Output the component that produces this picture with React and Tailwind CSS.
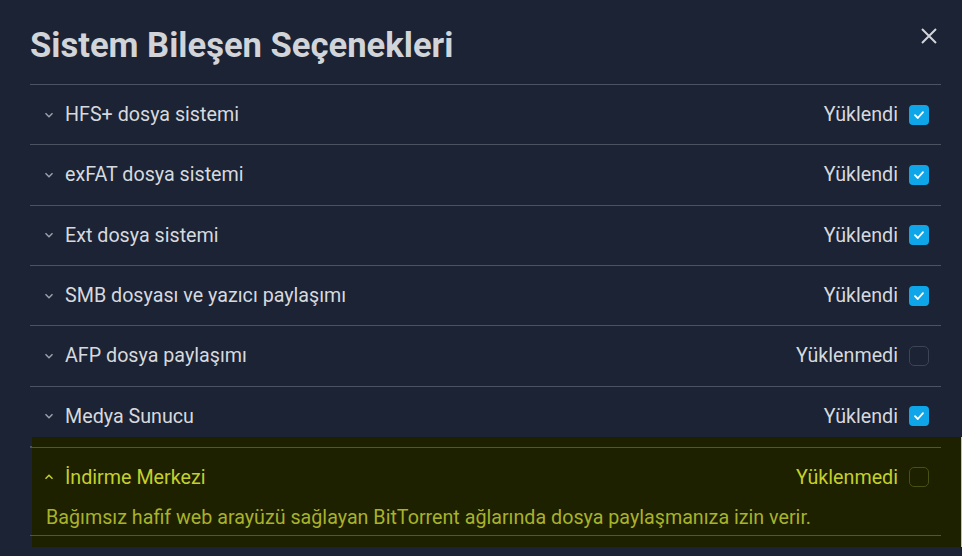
import React from 'react';

const items = [
  { name: 'HFS+ dosya sistemi', loaded: true },
  { name: 'exFAT dosya sistemi', loaded: true },
  { name: 'Ext dosya sistemi', loaded: true },
  { name: 'SMB dosyası ve yazıcı paylaşımı', loaded: true },
  { name: 'AFP dosya paylaşımı', loaded: false },
  { name: 'Medya Sunucu', loaded: true },
];

function Chevron({ up, className }) {
  return (
    <svg width="10" height="10" viewBox="0 0 10 10" className={className}>
      <path d={up ? 'M1.5 6.8 L5 3.3 L8.5 6.8' : 'M1.5 3.3 L5 6.8 L8.5 3.3'} fill="none" stroke="currentColor" strokeWidth="1.5" />
    </svg>
  );
}

function Checkbox({ checked, dim }) {
  if (checked) {
    return (
      <div className="w-5 h-5 rounded-[4px] bg-[#0ea5e9] flex items-center justify-center">
        <svg width="14" height="14" viewBox="0 0 14 14">
          <path d="M3 7.2 L5.8 10 L11 4.2" fill="none" stroke="white" strokeWidth="1.8" strokeLinecap="round" strokeLinejoin="round" />
        </svg>
      </div>
    );
  }
  return <div className={`w-5 h-5 rounded-[5px] border ${dim ? 'border-[#4a4f12]' : 'border-[#3b4556]'}`} />;
}

function Row({ name, loaded }) {
  return (
    <div className="h-[60.33px] border-b border-[#4b5261] flex items-center pl-[14px] pr-[12px]">
      <Chevron className="text-[#9aa0aa] mr-[11px]" />
      <span className="flex-1 text-[19.7px] text-[#d6d9de]">{name}</span>
      <span className="text-[19.7px] text-[#d6d9de] mr-[11px]">{loaded ? 'Yüklendi' : 'Yüklenmedi'}</span>
      <Checkbox checked={loaded} />
    </div>
  );
}

export default function App() {
  return (
    <div className="w-[962px] h-[556px] overflow-hidden bg-[#1c2334] font-['Roboto',sans-serif] pl-[30px] pr-[21px]">
      <div className="h-[85px] flex items-start justify-between border-b border-[#4b5261]">
        <h1 className="text-[34.6px] font-bold text-[#d1d4d9] leading-none mt-[28px]">Sistem Bileşen Seçenekleri</h1>
        <svg width="18" height="18" viewBox="0 0 18 18" className="mt-[27px] mr-[3px] text-[#d1d4d9]">
          <path d="M2 2 L16 16 M16 2 L2 16" stroke="currentColor" strokeWidth="2" />
        </svg>
      </div>
      <div className="w-[911px]">
        {items.map((it) => (
          <Row key={it.name} {...it} />
        ))}
      </div>
      <div className="ml-[2px] mr-[-21px] w-[930px] bg-[#1d2100] border-r border-[#c9d62a] pt-[10px] pb-[11px] -mt-[10px]">
        <div className="w-[911px] ml-[-2px] border-t border-b border-[#555a1c]">
          <div className="h-[59px] flex items-center pl-[14px] pr-[12px]">
            <Chevron up className="text-[#c6d02b] mr-[11px]" />
            <span className="flex-1 text-[19.7px] text-[#c6d02b]">İndirme Merkezi</span>
            <span className="text-[19.7px] text-[#c6d02b] mr-[11px]">Yüklenmedi</span>
            <Checkbox checked={false} dim />
          </div>
          <div className="pl-[16px] pb-[6px] text-[19.7px] text-[#a9b22a] leading-[22px]">
            Bağımsız hafif web arayüzü sağlayan BitTorrent ağlarında dosya paylaşmanıza izin verir.
          </div>
        </div>
      </div>
    </div>
  );
}
